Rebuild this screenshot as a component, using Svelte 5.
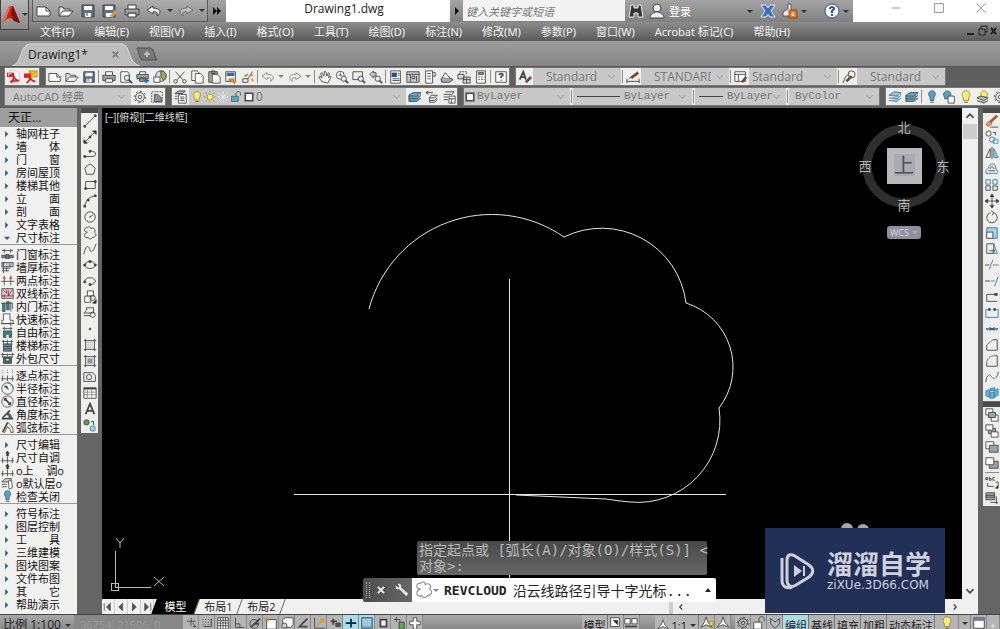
<script>
    const INK = 'stroke="#888"';
    const BLUE = 'stroke="#2f7fa8"';

    // 16x16 glyphs, inherit a dark 1px stroke and no fill from the svg
    const icons = {
        new: '<path fill="#fff" d="M1 4h9l4 4v5H1z"/><path d="M10 4v4h4"/>',
        open: '<path fill="#dde3e6" d="M1 13V4h4l1 2h6v2"/><path fill="#fff" d="M1 13l4-5h10l-4 5z"/>',
        save: '<path fill="#5d6f84" d="M2 2h12v12H2z"/><path fill="#fff" stroke="none" d="M4 3h8v4H4zM5 10h6v4H5z"/><path d="M7 10v3"/>',
        saveas: '<path fill="#5d6f84" d="M1 2h12v12H1z"/><path fill="#fff" stroke="none" d="M3 3h8v4H3zM4 10h6v4H4z"/><path stroke="#d89b3c" stroke-width="3" d="M9 14l5-6"/>',
        print: '<path fill="#fff" d="M4 6V2h8v4M4 11v3h8v-3"/><path fill="#99a0a6" d="M1 6h14v6h-3v-2H4v2H1z"/>',
        preview: '<path fill="#fff" d="M2 2h8l2 3v9H2z"/><circle cx="9" cy="9" r="3" fill="#dff0fa"/><path stroke-width="2" d="M11 11l4 4"/>',
        plot: '<path fill="#fff" d="M4 5V2h7v3"/><path fill="#99a0a6" d="M1 5h13v5H1zM4 9h7v4H4z"/><path stroke="#1e6fc0" stroke-width="2" d="M12 9v6M9 12h6"/>',
        sphere: '<circle cx="9" cy="7" r="6" fill="#d8dde0"/><path fill="#9fae55" d="M9 7V1c4 0 6 3 6 6 0 2-1 4-3 5z"/><path fill="#fff" d="M1 8h7v6H1z"/>',
        cut: '<path d="M3 2l8 9M13 2L5 11"/><circle cx="3" cy="13" r="2"/><circle cx="13" cy="13" r="2"/>',
        copy: '<path fill="#fff" d="M2 1h6l2 2v9H2z"/><path fill="#fff" d="M6 4h6l3 3v8H6z"/>',
        paste: '<path fill="#a9aaa6" d="M2 2h10v12H2z"/><path d="M5 1h4v3H5z"/><path fill="#fff" d="M6 5h6l3 3v7H6z"/>',
        match: '<path fill="#fff" d="M2 2h11v11H2z"/><path fill="#3b6ca8" stroke="none" d="M3 3h9v4H3z"/><path stroke="#d38a30" stroke-width="3" d="M5 11h7M9 12l4 3"/>',
        block: '<path d="M2 10h6v4H2zM8 10l5-8"/><path stroke="#d38a30" stroke-width="2" d="M4 7l4-2M11 6h3M12 10l2 3"/>',
        undo: '<path fill="#eee" d="M7 3L1 7l6 4V9c4-1 5 1 4 4 5-3 4-8-4-8z"/>',
        redo: '<path fill="#ddd" d="M9 3l6 4-6 4V9c-4-1-5 1-4 4-5-3-4-8 4-8z"/>',
        undoOff: `<path ${INK} d="M7 3L1 7l6 4V9c4-1 5 1 4 4 5-3 4-8-4-8z"/>`,
        redoOff: `<path ${INK} d="M9 3l6 4-6 4V9c-4-1-5 1-4 4-5-3-4-8 4-8z"/>`,
        pan: '<path fill="#fff" d="M4 13L1 8l1-1 3 2-2-5 1-1 3 4V2h2l1 5 2-4 1 1-1 5 2-2 1 1-4 7z"/>',
        zoomrt: '<circle cx="6" cy="6" r="4.5" fill="#fff"/><path d="M4 6h4M6 3v3"/><circle cx="10" cy="10" r="3" fill="#dff0fa"/><path stroke-width="2" d="M12 12l3 3"/>',
        zoomwin: '<path d="M1 2h11v9H1z"/><circle cx="10" cy="10" r="3" fill="#dff0fa"/><path stroke-width="2" d="M12 12l3 3"/>',
        zoomprev: '<path fill="#ccc" d="M5 1L1 5l4 4V7h3V3H5z"/><circle cx="10" cy="10" r="3" fill="#dff0fa"/><path stroke-width="2" d="M12 12l3 3"/>',
        props: '<path fill="#fff" d="M2 1h11v14H2z"/><path fill="#274f8d" stroke="none" d="M3 3h6v5H3z"/><path d="M10 4h2M10 6h2M4 10h8M4 12h8"/>',
        center: '<path fill="#c9cdd0" d="M1 2h14v12H1z"/><path d="M1 5h14M5 5v9M7 7h3v3H7zM12 7v6"/>',
        palette: '<path fill="#fff" d="M3 1h8v14H3z"/><path d="M11 3h3v4h-3M5 4h4M5 7h4M5 10h4"/>',
        sheet: '<path fill="#9ba6ae" d="M1 10l5-4 9 5-4 3H2z"/><path fill="#fff" d="M3 8l3-5 5 6"/>',
        markup: '<path stroke-dasharray="2 1" d="M3 5V2h8v3"/><path fill="#ddd" d="M7 8h8v7H7zM1 5h7v5H1z"/><path d="M7 11h8M11 8v7"/>',
        calc: '<path fill="#fff" d="M3 1h10v14H3z"/><path fill="#999" d="M5 3h6v2H5z"/><path stroke-dasharray="2 1" d="M5 8h7M5 11h7"/>',
        help: '<path fill="#fff" d="M2 2h12v12H2z"/><path stroke-width="2" d="M6 6c0-3 5-2 4 0l-2 2v1M8 11v1"/>',
        pdf: '<path fill="#fff" stroke="#ccc" d="M3 1h8l3 3v11H3z"/><path fill="#d22" stroke="none" d="M0 3h8v5H0z"/><path stroke="#d22" stroke-width="2" d="M4 14c4-3 4-6 4-7 1 4 3 5 6 5-4 0-7 0-10 2z"/><path stroke="#fff" d="M2 7V4h3"/>',
        pdfmail: '<path fill="#f4c534" stroke="#c98f1b" d="M6 1h9v7H6z"/><path stroke="#c98f1b" d="M6 1l4 4 5-4"/><path fill="#d22" stroke="none" d="M0 4h8v5H0z"/><path stroke="#d22" stroke-width="2" d="M3 15c4-3 4-6 4-7 1 4 3 5 6 5"/>',
        styleA: '<path stroke-width="2" d="M2 11L6 2l3 9M3 8h5"/><path stroke="#7a4a28" stroke-width="3" d="M9 14l6-6"/>',
        styleDim: '<path d="M1 10v5M15 10v5M1 13h14"/><path stroke="#7a4a28" stroke-width="3" d="M6 9l8-6"/><path d="M3 10l5-3"/>',
        styleTab: '<path fill="#fff" d="M1 2h12v11H1z"/><path d="M1 5h12M5 5v8"/><path stroke="#7a4a28" stroke-width="3" d="M9 14l5-6"/>',
        styleLead: '<circle cx="11" cy="5" r="4"/><path d="M1 15l3-7 4-4"/><path stroke="#7a4a28" stroke-width="3" d="M5 13l6-6"/>',
        gear: '<circle cx="8" cy="8" r="5"/><circle cx="8" cy="8" r="2"/><circle cx="8" cy="8" r="6.5" stroke-dasharray="2 3"/>',
        wsave: '<path stroke-dasharray="2 1" d="M2 2h12v12H2z"/><path fill="#88929a" d="M5 5h4l4 4v4H5z"/>',
        layers: '<path fill="#fff" d="M5 5h9v10H5z"/><path d="M7 8h5M7 10h5M7 12h5"/><path fill="#9cb6c4" d="M1 4l4-3h8l-3 3zM1 7h3M1 10h3"/>',
        stack: '<path fill="#9bc3db" stroke="#47758e" d="M1 6l6-4 8 1-5 4zM1 9l9 1 5-4M1 12l9 1 5-4"/>',
        stackcur: '<path fill="#5aa6d2" d="M1 6l5-3h9l-5 4H1zM1 7v3h9l5-4M1 10v3h9l5-4"/>',
        stackprev: '<path d="M7 6h7l-3 3H5zM5 9v3h6l3-3M5 12v2h6l3-3M1 3h8M1 3l3-2M1 3l3 2"/>',
        stackstate: '<path d="M4 2h10l-3 3H2M2 8h5M2 11h5"/><path fill="#fff" d="M8 7h7v8H8z"/><path d="M8 10h7M11 10v5"/>',
        bulbOn: '<path fill="#ffe97a" stroke="#a08b2e" d="M5 9C2 5 4 1 8 1s6 4 3 8v3H5z"/><path d="M6 14h4"/>',
        bulbOff: '<path fill="#5b9fc4" stroke="#336580" d="M6 9C3 5 4 1 8 1s5 4 2 8v3H6z"/><path d="M6 14h4"/>',
        bulbCopy: '<path fill="#5b9fc4" stroke="#336580" d="M3 8C0 5 3 1 6 1s6 4 3 7v2H3z"/><path fill="#fff" d="M7 7h7v8H7z"/>',
        bulbStack: '<path fill="#ffe97a" stroke="#a08b2e" d="M7 8C4 5 6 1 9 1s6 4 3 7z"/><path fill="#bbb" d="M1 9l4-2 9 2-5 3zM1 12l8 3 5-3"/>',
        sun: '<circle cx="8" cy="8" r="4" fill="#ffe97a" stroke="#a08b2e"/><path stroke="#a08b2e" d="M8 0v2M8 14v2M0 8h2M14 8h2M2 2l2 2M12 12l2 2M2 14l2-2M12 4l2-2"/>',
        frost: '<path stroke="#eee" stroke-dasharray="3 1" d="M8 1v14M1 8h14M3 3l10 10M3 13L13 3"/>',
        lock: '<path fill="#65a3c5" stroke="#336580" d="M2 7h9v7H2z"/><path d="M8 7V3c0-3 6-3 6 0v3"/>',
        box: '<path fill="#fff" stroke-width="2" d="M3 3h10v10H3z"/>',
        line: '<path d="M2 14L14 2"/><path fill="#444" d="M1 13h2v2H1zM13 1h2v2h-2z"/>',
        xline: '<path d="M2 14L14 2"/><path fill="#222" d="M1 15v-4l4 4zM15 1v4l-4-4zM7 7h2v2H7z"/>',
        pline: '<path d="M2 12h9c5 0 4-6 0-6H8"/><path fill="#444" d="M1 11h2v2H1zM7 5h2v2H7z"/>',
        polygon: '<path d="M8 2l6 5-2 7H4L2 7z"/>',
        rect: '<path d="M3 4h11v8H3z"/><path fill="#444" d="M2 11h2v2H2zM13 3h2v2h-2z"/>',
        arc: '<path d="M2 14C3 7 7 3 14 2"/><path fill="#444" d="M1 13h2v2H1zM5 6h2v2H5zM13 1h2v2h-2z"/>',
        circle: '<circle cx="8" cy="8" r="6"/><path d="M8 8l4-3M7 8h2"/>',
        cloud: '<path d="M5 7C0 7 1 1 5 2c2-2 4-1 4 1 4-2 6 2 4 4 3 2 2 6-2 6-2 3-5 2-5 0-5 2-6-4-1-6z"/>',
        spline: '<path d="M1 14C4 0 7 6 8 9s3 4 7-7"/>',
        ellipse: '<ellipse cx="8" cy="8" rx="6" ry="4"/><path fill="#222" d="M7 3h2v2H7zM1 7h2v2H1zM13 7h2v2h-2z"/>',
        earc: '<path d="M2 8c0-5 12-5 12 0 0 3-3 4-6 4"/><path fill="#444" d="M7 11h2v2H7zM1 8h2v2H1z"/>',
        insert: '<path fill="#fff" d="M5 1h7v6H5z"/><path fill="#fff" d="M2 7h7v7H2z"/><circle cx="11" cy="9" r="3"/><path fill="#222" d="M15 11v4h-4z"/>',
        makeblock: '<path d="M4 2h8v6H1l3-3zM1 11h7"/><circle cx="11" cy="10" r="3"/>',
        point: '<circle cx="8" cy="8" r="1" fill="#444"/>',
        hatch: '<path d="M1 3h14M1 13h14M3 1v14M13 1v14"/><path stroke="#999" stroke-dasharray="1 1" d="M4 5h8M4 7h8M4 9h8M4 11h8"/>',
        gradient: '<path fill="#8d979d" stroke="none" d="M5 5h6v6H5z"/><path d="M1 3h14M1 13h14M3 1v14M13 1v14"/>',
        region: '<path d="M1 3h9c4 0 5 5 4 10H1z"/><circle cx="7" cy="8" r="3"/>',
        table: '<path fill="#fff" d="M1 2h14v12H1z"/><path stroke-width="2" d="M1 3h14"/><path stroke="#888" d="M1 7h14M1 10h14M5 4v10M10 4v10"/>',
        mtext: '<path stroke-width="2" d="M3 14L8 2l5 12M5 10h6"/>',
        addsel: '<circle cx="4" cy="5" r="3" fill="#5da257"/><circle cx="11" cy="12" r="3" fill="#a5d5ef" stroke="#2f7fa8"/><path d="M9 4h3v4"/>',
        erase: '<path stroke="#a55a2c" stroke-width="3" d="M5 10l9-8"/><path fill="#d9a17a" stroke="#a55a2c" d="M1 12l4-4 3 3-4 3z"/><path d="M6 15h9"/>',
        copyobj: `<circle cx="4" cy="4" r="3"/><path d="M9 3h3v3"/><g ${BLUE}><circle cx="8" cy="11" r="3"/><circle cx="12" cy="13" r="3"/></g>`,
        mirror: `<path d="M6 3v10H1z"/><path fill="#9cc9df" ${BLUE} d="M10 3v10h5z"/><path d="M8 1v14"/>`,
        offset: `<path ${BLUE} d="M1 12c0-4 2-4 3-5 1-8 10-5 8 1 3 0 3 4 2 5H1z"/><path d="M4 10h8M6 8c0-4 4-3 4 0"/>`,
        array: `<path d="M1 9h5v5H1zM9 9h5v5H9z"/><path ${BLUE} d="M1 2h5v5H1zM9 2h5v5H9z"/>`,
        move: '<path fill="#222" d="M8 0l2 3H6zM8 16l2-3H6zM0 8l3-2v4zM16 8l-3-2v4z"/><path d="M8 3v3M8 10v3M3 8h3M10 8h3M7 7h2v2H7z"/>',
        rotate: '<path d="M10 3a6 6 0 1 1-4 0M10 3L7 1M10 3L8 6"/>',
        scale: `<path fill="#a6d1e6" ${BLUE} d="M2 2h12v12H2z"/><path fill="#fff" d="M2 7h7v7H2z"/>`,
        stretch: `<path d="M2 2h8v11H2z"/><path ${BLUE} d="M10 2l4 11H2"/><path d="M5 10h6M9 8l2 2-2 2"/>`,
        trim: `<path d="M0 8h5"/><path ${BLUE} d="M5 13l4-11"/><path stroke-dasharray="2 1" d="M9 8h7"/>`,
        extend: `<path d="M0 8h6"/><path ${BLUE} d="M11 14l4-11M7 8h4"/>`,
        breakpt: '<path d="M14 13H2V5h10"/><path fill="#245f85" d="M11 4h3v2h-3z"/>',
        break: `<path ${BLUE} d="M3 4H1v9h14V4h-2"/><path fill="#245f85" d="M4 3h2v2H4zM10 3h2v2h-2z"/>`,
        join: `<path ${BLUE} stroke-width="2" d="M1 8h14"/><path d="M5 6l3 2-3 2M11 6L8 8l3 2"/>`,
        chamfer: `<path d="M2 8v6h12V2H9"/><path ${BLUE} d="M2 8l7-6"/>`,
        fillet: `<path d="M2 10v4h12V2h-3"/><path ${BLUE} d="M2 10c0-5 4-8 9-8"/>`,
        blend: `<path d="M1 14c0-4 1-7 3-8M12 9c2-1 3-4 3-7"/><path ${BLUE} d="M4 6c3-3 4 7 8 3"/>`,
        explode: `<g fill="#6db4d6" ${BLUE}><path d="M1 6l4-2v9l-4-2zM6 7h4v7H6zM11 5l4-2v7l-4 3zM6 3l5-1v3H6z"/></g>`,
        front: '<path fill="#fff" d="M1 1h8v7H1zM7 8h8v7H7z"/><path fill="#9ca3a8" d="M4 5h8v6H4z"/>',
        back: '<path fill="#9ca3a8" d="M4 5h8v6H4z"/><path fill="#fff" d="M1 1h8v6H1zM7 9h8v6H7z"/>',
        above: '<path fill="#fff" d="M1 2h9v8H1z"/><path fill="#9ca3a8" d="M5 6h10v8H5z"/>',
        under: '<path fill="#9ca3a8" d="M5 6h10v8H5z"/><path fill="#fff" d="M1 2h9v8H1z"/>',
        textfront: '<path d="M1 6V3h2v3M1 5h2M5 2v4h2V4H5M11 3H9v3h2M3 9v4h7M12 8h3v4"/><path fill="#222" d="M15 12v3h-3z"/>',
        hatchback: '<path fill="#9ca3a8" d="M1 2h10v8H1z"/><path d="M1 5h10M1 7h10M6 13h9M13 6v9"/>',
        wallA: '<path d="M1 3h14M4 1v5M12 1v5"/><path fill="#5a8a98" d="M1 9h5v3H1zM10 9h5v3h-5zM6 8h4v5H6z"/>',
        wallB: '<path fill="#bcd" d="M1 2h14v5H1z"/><path d="M3 1v14M7 7v6M1 9h10M1 12h9M11 3v5"/>',
        dim2: '<path d="M0 9h16M4 2v12M12 2v12"/><path stroke="#b22" d="M2 5h4M10 5h4"/>',
        dimD: '<path fill="#e5d0d0" d="M1 2h14v12H1z"/><path stroke="#822" d="M2 3l5 5V3M14 3l-5 8V4M1 11h14M4 13V9"/>',
        dimN: '<path fill="#3d8c93" d="M2 4h3v10H2zM7 2h3v10H7z"/><path d="M0 4h15M12 2v12M14 5v6"/>',
        quick: '<path fill="#fff" d="M3 1h8v8h4v4H1V9h2z"/><path d="M0 13h16M12 11v5"/>',
        free: '<path fill="#3a8a7f" d="M3 6h10v8h-3v-4H6v4H3z"/><path d="M2 3h12M4 1v4M12 1v4"/>',
        stair: '<path fill="#6b87a5" d="M3 6h10v9H3z"/><path d="M1 3h14M3 1v6M8 1v6M13 1v6M3 9h10M3 12h10"/>',
        outer: '<path fill="#3b7060" d="M3 6h10v8H3z"/><path fill="#fff" d="M6 8h4v3H6z"/><path d="M0 3h16M2 1v6M14 1v6M8 2v3"/>',
        each: '<path d="M0 12h16M2 8v7M8 8v7M14 8v7"/><path stroke="#b22" stroke-dasharray="1 2" d="M2 1v6M8 1v6M14 1v6"/>',
        radius: '<circle cx="8" cy="8" r="7"/><path fill="#333" d="M9 9L4 5h3z"/><path stroke="#277" d="M8 1a7 7 0 0 1 7 7"/>',
        diameter: '<circle cx="8" cy="8" r="7"/><path stroke-width="2" d="M5 5l6 6"/><path fill="#333" d="M4 4h3L4 7zM12 12H9l3-3z"/>',
        angle: '<path stroke-width="2" d="M1 13h14M2 12l9-9"/><path fill="#277" d="M7 8c3 1 3 3 3 5h3c0-4-2-6-4-7z"/>',
        arclen: '<path stroke-width="2" d="M2 14L8 2"/><path d="M4 15l4-8c3 2 4 4 4 7h3C15 7 11 3 8 2"/>',
        self: '<path d="M0 12h16M2 8v7M14 8v7M8 7v8"/><path fill="#222" d="M8 0l2 3H6zM7 4h2v2H7z"/>',
        deflayer: '<path fill="#ccc" d="M1 6l4-4h8l-3 4zM1 9h6M1 12h6"/><path fill="#fff" d="M9 5l4-1 1 9-4 2z"/>',
        snap: '<path d="M8 2v9M3 6h10M10 8l4 5M10 12h4"/>',
        dots: '<path stroke-dasharray="1 2" d="M3 4h10M3 7h10M3 10h10"/><path d="M13 3v9H4"/>',
        grid: '<path fill="#fff" d="M2 2h12v13H2z"/><path d="M5 2v13M8 2v13M11 2v13M2 5h12M2 8h12M2 11h12"/>',
        ortho: '<path d="M4 2v11h10M4 9h5v4"/>',
        polar: '<circle cx="7" cy="9" r="5"/><path stroke-width="2" d="M3 13L14 3M6 9h6"/>',
        osnap: '<path fill="#fff" d="M3 4h11v11H3z"/><path stroke="#c93" d="M1 2h4v4H1z"/>',
        cube: '<path fill="#fff" d="M3 4l3-2h9v8l-3 3H3z"/><circle cx="5" cy="11" r="3" fill="#ccc"/>',
        otrack: '<path stroke-width="2" d="M13 3L4 12h9"/>',
        ducs: '<path d="M3 2v12h12"/><path stroke="#e29a2e" stroke-width="2" d="M6 11l6-7M9 4h4v4"/>',
        dyn: '<path stroke-width="2" d="M3 6h7M6 3v7"/><path fill="#555" d="M9 8h5v4H9z"/>',
        lwt: '<path stroke="#123" stroke-width="2" d="M2 8h12M8 3v10"/>',
        tpy: '<path fill="#7fb7dc" d="M2 2h12v12H2z"/><path stroke="#fff" stroke-dasharray="1 1" d="M3 4h10M3 6h10M3 8h10M3 10h10"/>',
        qp: '<path fill="#eee" stroke-width="2" d="M5 4h7v8H5z"/>',
        cycle: '<path fill="#62a552" d="M8 7h6v8H8z"/><path d="M2 4h7v3M5 1v6"/>',
        plus: '<path fill="#fff" d="M6 2h4v4h4v4h-4v5H6v-5H2V6h4z"/>',
        anno: '<path fill="#fff" d="M8 1l2 6 5 6-7-3-7 3 5-6z"/>',
        annoY: '<path fill="#fff" d="M7 1l2 6 5 6-7-3-6 3 4-6z"/><path fill="#f5d54a" stroke="#a08b2e" d="M11 6h4v5h-4z"/>',
        sheetA: '<path fill="#fff" d="M3 2h10v10H3z"/><path fill="#222" d="M6 5h5v5z"/>',
        sheetB: '<path fill="#fff" d="M1 3h6v6H1zM9 3h6v6H9z"/><path stroke-width="2" d="M1 12h14"/>',
        unlock: '<path fill="#fff" d="M2 7h9v8H2z"/><path d="M8 7V3c0-3 6-3 6 0v3"/>',
        shield: '<path fill="#bbb" d="M3 3l5 4 5-4v6l-5 5-5-5z"/>',
        clean: '<path fill="#fff" d="M2 2h12v12H2z"/><path stroke-width="3" stroke="#679" d="M2 4h12"/>',
        more: '<path stroke="#eee" d="M5 12h6M8 9v6"/>',
        binoc: '<path fill="#333" stroke="#eee" d="M3 2h3v3h4V2h3l2 12h-5v-4H6v4H1z"/>',
        user: '<circle cx="8" cy="5" r="4" fill="#eee"/><path fill="#eee" d="M1 15c0-5 5-5 5-6h4c0 1 5 1 5 6z"/>',
        exchange: '<path fill="#3e6fb6" stroke="#dfe8f5" d="M1 2h5l2 3 2-3h5l-4 6 4 6h-5l-2-3-2 3H1l4-6z"/>',
        a360: '<path fill="#eee" stroke="#557" d="M6 1h3v5l4 4-2 3H1V9l5-3z"/><path fill="#e07a1c" stroke="#a44b08" d="M7 7h8v8H7z"/><path stroke="#fff" d="M11 9v4M9 11l2 2 2-2"/>',
        qhelp: '<circle cx="8" cy="8" r="7" fill="#fff" stroke="#2a4f93"/><path stroke="#2a4f93" stroke-width="2" d="M6 6c0-3 5-2 4 0l-2 2v2M8 11v2"/>',
        wrench: '<path fill="#e5e5e5" stroke="none" d="M1 3l3 2 1-1-2-3c3-1 5 1 4 4l8 7-2 3-8-8C2 8 0 6 1 3z"/>',
        x: '<path stroke="#eee" stroke-width="3" d="M3 3l10 10M13 3L3 13"/>',
        xtab: '<path stroke="#7d7d7d" stroke-width="3" d="M3 3l10 10M13 3L3 13"/>',
        min: '<path stroke="#888" d="M3 8h10"/>',
        max: '<path stroke="#888" d="M3 3h10v10H3z"/>',
        close: '<path stroke="#888" d="M3 3l10 10M13 3L3 13"/>',
        first: '<path d="M3 3v10"/><path fill="#555" d="M11 3v10L6 8z"/>',
        prev: '<path fill="#555" d="M10 3v10L5 8z"/>',
        next: '<path fill="#555" d="M6 3v10l5-5z"/>',
        last: '<path d="M13 3v10"/><path fill="#555" d="M5 3v10l5-5z"/>',
        up: '<path stroke-width="2" d="M4 10l4-4 4 4"/>',
        down: '<path stroke-width="2" d="M4 6l4 4 4-4"/>',
        left: '<path stroke-width="2" d="M10 4L6 8l4 4"/>',
        right: '<path stroke-width="2" d="M6 4l4 4-4 4"/>',
        tri: '<path fill="#2c6384" stroke="none" d="M5 3v10l5-5z"/>',
        tridown: '<path fill="#2c6384" stroke="none" d="M3 6h10l-5 5z"/>'
    };

    const menus = ['文件(F)', '编辑(E)', '视图(V)', '插入(I)', '格式(O)', '工具(T)', '绘图(D)', '标注(N)', '修改(M)', '参数(P)', '窗口(W)', 'Acrobat 标记(C)', '帮助(H)'];

    // '|' is a separator, 'v' a small drop arrow
    const standard = ['new', 'open', 'save', '|', 'print', 'preview', 'plot', 'sphere', '|', 'cut', 'copy', 'paste', 'match', 'block', '|', 'undoOff', 'v', 'redoOff', 'v', '|', 'pan', 'zoomrt', 'zoomwin', 'zoomprev', '|', 'props', 'center', 'palette', 'sheet', 'markup', 'calc', '|', 'help'];
    const layerTools = ['stack', 'stackcur', '|', 'bulbOff', 'bulbCopy', 'bulbOn', 'bulbStack', 'gear'];

    const styles = [
        { icon: 'styleA', label: '文字样式', value: 'Standard' },
        { icon: 'styleDim', label: '标注样式', value: 'STANDARD' },
        { icon: 'styleTab', label: '表格样式', value: 'Standard' },
        { icon: 'styleLead', label: '多重引线样式', value: 'Standard' }
    ];

    const draw = ['line', 'xline', 'pline', 'polygon', 'rect', 'arc', 'circle', 'cloud', 'spline', 'ellipse', 'earc', 'insert', 'makeblock', 'point', 'hatch', 'gradient', 'region', 'table', 'mtext', 'addsel'];
    const modify = ['erase', 'copyobj', 'mirror', 'offset', 'array', 'move', 'rotate', 'scale', 'stretch', 'trim', 'extend', 'breakpt', 'break', 'join', 'chamfer', 'fillet', 'blend', 'explode'];
    const order = ['front', 'back', 'above', 'under', '|', 'textfront', 'hatchback'];

    const sections = [
        [['tri', '轴网柱子'], ['tri', '墙 体'], ['tri', '门 窗'], ['tri', '房间屋顶'], ['tri', '楼梯其他'], ['tri', '立 面'], ['tri', '剖 面'], ['tri', '文字表格'], ['tridown', '尺寸标注']],
        [['wallA', '门窗标注'], ['wallB', '墙厚标注'], ['dim2', '两点标注'], ['dimD', '双线标注'], ['dimN', '内门标注'], ['quick', '快速标注'], ['free', '自由标注'], ['stair', '楼梯标注'], ['outer', '外包尺寸']],
        [['each', '逐点标注'], ['radius', '半径标注'], ['diameter', '直径标注'], ['angle', '角度标注'], ['arclen', '弧弦标注']],
        [['tri', '尺寸编辑'], ['self', '尺寸自调'], ['self', 'o上 调o'], ['deflayer', 'o默认层o'], ['bulbOff', '检查关闭']],
        [['tri', '符号标注'], ['tri', '图层控制'], ['tri', '工 具'], ['tri', '三维建模'], ['tri', '图块图案'], ['tri', '文件布图'], ['tri', '其 它'], ['tri', '帮助演示']]
    ];

    const toggles = ['snap', 'dots', 'grid', 'ortho', 'polar', 'osnap', 'cube', 'otrack', 'ducs', 'dyn', 'lwt', 'tpy', 'qp', 'cycle', 'plus'];
    const modes = ['编组', '基线', '填充', '加粗', '动态标注'];

    let active = $state(['lwt', 'tpy', '编组']);
    let command = $state('沿云线路径引导十字光标...');

    function toggle(name) {
        active = active.includes(name) ? active.filter(n => n !== name) : [...active, name];
    }
</script>

{#snippet icon(name, size = 14)}
    <svg class="icon" width={size} height={size} viewBox="0 0 16 16" fill="none" stroke="#444" aria-hidden="true">{@html icons[name]}</svg>
{/snippet}

{#snippet tools(list)}
    {#each list as name}
        {#if name === '|'}
            <span class="sep"></span>
        {:else if name === 'v'}
            <button class="drop" aria-label="more"><i class="caret"></i></button>
        {:else}
            <button class="tool" aria-label={name}>{@render icon(name)}</button>
        {/if}
    {/each}
{/snippet}

<div class="app">
    <header class="title">
        <button class="logo" aria-label="menu">
            <svg width="18" height="20" viewBox="0 0 18 20" aria-hidden="true">
                <path fill="#c4221b" d="M7 1h4l7 17-6-2-3-3-4 1-5 4z"/>
                <path fill="#7d0f0c" d="M11 1l7 17-6-2L9 8z"/>
                <path fill="#ef6a55" d="M7 1h2L4 14l-4 4z"/>
            </svg>
            <i class="caret"></i>
        </button>
        <div class="quick">
            {#each ['new', 'open', 'save', 'saveas', 'print', 'undo'] as name}
                <button class="qat" aria-label={name}>{@render icon(name, 16)}</button>
            {/each}
            <button class="drop" aria-label="undo list"><i class="caret"></i></button>
            <button class="qat dim" aria-label="redo">{@render icon('redo', 16)}</button>
            <button class="drop" aria-label="redo list"><i class="caret"></i></button>
        </div>
        <button class="expand" aria-label="expand"><i class="play"></i><i class="play"></i></button>
        <h1>Drawing1.dwg</h1>
        <button class="go" aria-label="search options"><i class="play"></i></button>
        <input class="search" placeholder="键入关键字或短语" aria-label="搜索">
        <div class="info">
            <button class="qat" aria-label="find">{@render icon('binoc', 16)}</button>
            <button class="login">{@render icon('user', 16)}<span>登录</span></button>
            <i class="caret push"></i>
            <button class="qat" aria-label="exchange">{@render icon('exchange', 16)}</button>
            <button class="qat" aria-label="connect">{@render icon('a360', 16)}</button>
            <i class="caret"></i>
            <button class="qat ask" aria-label="help">{@render icon('qhelp', 16)}</button>
            <i class="caret"></i>
        </div>
        <div class="winbtns">
            <button aria-label="minimize">{@render icon('min', 14)}</button>
            <button aria-label="maximize">{@render icon('max', 14)}</button>
            <button aria-label="close">{@render icon('close', 14)}</button>
        </div>
    </header>

    <nav class="menubar">
        {#each menus as menu}
            <button>{menu}</button>
        {/each}
        <span class="docbtns">
            <svg width="32" height="12" viewBox="0 0 32 12" fill="none" stroke="#222" aria-hidden="true">
                <path stroke-width="2" d="M1 9h7M25 3l5 6M30 3l-5 6"/>
                <path d="M13 4h6v6h-6zM15 4V1h6v6h-2"/>
            </svg>
        </span>
    </nav>

    <div class="tabs">
        <div class="tab">
            <svg class="shape" viewBox="0 0 128 24" preserveAspectRatio="none" aria-hidden="true">
                <path fill="#bdbdbd" stroke="#d8d8d8" d="M0 24C10 22 8 1 18 1h92c8 0 6 20 18 23z"/>
            </svg>
            <span>Drawing1*</span>
            <button aria-label="close tab">{@render icon('xtab', 9)}</button>
        </div>
        <button class="newtab" aria-label="new tab">
            <svg width="22" height="14" viewBox="0 0 22 14" fill="#777" stroke="#4e4e4e" aria-hidden="true">
                <path d="M1 1h13c5 0 4 9 7 12H8C2 13 4 5 1 1z"/>
                <path stroke="#bbb" stroke-width="2" d="M11 4v6M8 7h6"/>
            </svg>
        </button>
    </div>

    <div class="dock">
        <div class="bars">
            <div class="bar">{@render tools(['pdf', 'pdfmail'])}</div>
            <div class="bar">{@render tools(standard)}</div>
            <div class="bar">
                {#each styles as s, i}
                    {#if i}<span class="sep"></span>{/if}
                    <button class="tool" aria-label={s.label}>{@render icon(s.icon)}</button>
                    <span class="pick style" class:tight={i === 2}><select aria-label={s.label}><option>{s.value}</option></select></span>
                {/each}
            </div>
        </div>
        <div class="bars">
            <div class="bar">
                <span class="pick workspace"><select aria-label="工作空间"><option>AutoCAD 经典</option></select></span>
                {@render tools(['gear', 'wsave'])}
            </div>
            <div class="bar">
                {@render tools(['layers'])}
                <span class="pick layer">
                    {#each ['bulbOn', 'sun', 'frost', 'lock', 'box'] as name}{@render icon(name, 12)}{/each}
                    <select aria-label="图层"><option>0</option></select>
                </span>
                {@render tools(['stackcur', 'stackprev', 'stackstate'])}
            </div>
            <div class="bar mono">
                <span class="pick color">{@render icon('box', 12)}<select aria-label="颜色"><option>ByLayer</option></select></span>
                <span class="sep"></span>
                <span class="pick ltype"><i class="rule"></i><select aria-label="线型"><option>ByLayer</option></select></span>
                <span class="sep"></span>
                <span class="pick weight"><i class="rule"></i><select aria-label="线宽"><option>ByLayer</option></select></span>
                <span class="sep"></span>
                <span class="pick plotstyle"><select aria-label="打印样式"><option>ByColor</option></select></span>
            </div>
            <div class="bar last">{@render tools(layerTools)}</div>
        </div>
    </div>

    <main>
        <aside class="side">
            <h2>天正...</h2>
            {#each sections as rows, i}
                <ul class:ruled={i > 0}>
                    {#each rows as [glyph, label]}
                        <li><button><span class="glyph">{@render icon(glyph, glyph.startsWith('tri') ? 10 : 13)}</span><span class="label" class:wide={label.includes('o')}>{#each label.split(' ') as part}<span>{part}</span>{/each}</span></button></li>
                    {/each}
                </ul>
            {/each}
        </aside>

        <div class="rail left">
            <div class="column"><i class="grip"></i>{@render tools(draw)}</div>
        </div>

        <section class="view">
            <div class="canvas">
                <svg class="drawing" viewBox="102 108 860 491" preserveAspectRatio="xMinYMin meet" fill="none" stroke="#e6e6e6" aria-hidden="true">
                    <path d="M369 309A127 127 0 0 1 564 237A85 85 0 0 1 686 303A67 67 0 0 1 719 408A82 82 0 0 1 630 502Q618 501 606 499L516 495"/>
                    <g shape-rendering="crispEdges">
                        <path d="M509.500 279V578M294 494.500H726"/>
                        <path stroke="#bbb" d="M115.500 551V587M115 587.500H151M111.500 583.500h7v7h-7z"/>
                    </g>
                    <path stroke="#bbb" d="M116 538l4 5 4-5M120 543v5M154 577l10 9M164 577l-10 9"/>
                    <g fill="#a9a9a9" stroke="none"><circle cx="847" cy="529" r="6"/><circle cx="863" cy="530" r="6"/></g>
                </svg>
                <div class="viewlabel">[−][俯视][二维线框]</div>
                <div class="compass">
                    <svg width="92" height="96" viewBox="0 0 92 96" aria-hidden="true">
                        <circle cx="46" cy="48" r="37" fill="none" stroke="#2e2e2e" stroke-width="9"/>
                        <path fill="#b9b9bb" d="M29 30h35v36H29z"/>
                        <path fill="#a9abb0" d="M36 36h21v22H36z"/>
                        <g class="dirs"><text x="46" y="14">北</text><text x="7" y="53">西</text><text x="85" y="53">东</text><text x="46" y="92">南</text></g>
                        <text class="face" x="46" y="55">上</text>
                    </svg>
                    <button class="wcs">WCS <i class="caret"></i></button>
                </div>
            </div>
            <div class="vscroll">
                <button aria-label="up">{@render icon('up')}</button>
                <i class="thumb"></i>
                <button class="end" aria-label="down">{@render icon('down')}</button>
            </div>
            <div class="layouts">
                {#each ['first', 'prev', 'next', 'last'] as name}
                    <button class="step" aria-label={name}>{@render icon(name, 12)}</button>
                {/each}
                <button class="layout on"><span>模型</span></button>
                <button class="layout"><span>布局1</span></button>
                <button class="layout"><span>布局2</span></button>
                <span class="hscroll">
                    <i class="split"></i>
                    <button aria-label="left">{@render icon('left', 10)}</button>
                    <button class="end" aria-label="right">{@render icon('right', 10)}</button>
                </span>
            </div>

            <div class="command">
                <div class="history"><p>指定起点或 [弧长(A)/对象(O)/样式(S)] &lt;</p><p>对象&gt;:</p></div>
                <div class="entry">
                    <i class="handle"></i>
                    <button class="x" aria-label="close">{@render icon('x', 10)}</button>
                    <button class="cfg" aria-label="customize">{@render icon('wrench')}</button>
                    <label for="cmd"><span class="faded">{@render icon('cloud', 18)}</span><i class="caret"></i><b>REVCLOUD</b></label>
                    <input id="cmd" bind:value={command}>
                    <button class="recent" aria-label="recent"><i class="caret flip"></i></button>
                </div>
            </div>

            <div class="brand">
                <svg width="36" height="38" viewBox="0 0 36 38" fill="none" stroke="#cdd1dd" stroke-width="3" aria-hidden="true">
                    <path d="M8 28V8c0-6 4-6 8-4l14 9c5 4 5 8 0 12l-13 8c-5 3-9 1-9-5"/>
                    <path d="M3 6v22c0 7 5 9 10 7"/>
                    <path fill="#cdd1dd" stroke="none" d="M15 13v12l8-6zM24 14h2v10h-2z"/>
                </svg>
                <div><strong>溜溜自学</strong><span>ziXUe.3D66.COM</span></div>
            </div>
        </section>

        <div class="rail right">
            <div class="column"><i class="grip"></i>{@render tools(modify)}</div>
            <div class="column"><i class="grip"></i>{@render tools(order)}</div>
        </div>
    </main>

    <footer>
        <button class="ratio">比例 1:100 <i class="caret"></i></button>
        <span class="coords">96754, 21506, 0</span>
        {#each toggles as name}
            <button class="toggle" class:on={active.includes(name)} aria-label={name} onclick={() => toggle(name)}>{@render icon(name)}</button>
        {/each}
        <span class="fill"></span>
        <button class="mode">模型</button>
        <button class="toggle" aria-label="layout">{@render icon('sheetA')}</button>
        <button class="toggle" aria-label="views">{@render icon('sheetB')}</button>
        <span class="gap"></span>
        <button class="mode scale">{@render icon('anno', 12)}1:1<i class="caret"></i></button>
        {#each ['annoY', 'anno'] as name}
            <button class="toggle" aria-label={name}>{@render icon(name)}</button>
        {/each}
        <span class="gap small"></span>
        {#each ['gear', 'unlock', 'shield'] as name}
            <button class="toggle" aria-label={name}>{@render icon(name)}</button>
        {/each}
        {#each modes as name}
            <button class="mode" class:on={active.includes(name)} onclick={() => toggle(name)}>{name}</button>
        {/each}
        <button class="toggle lamp" aria-label="isolate">{@render icon('bulbOn')}</button>
        <button class="toggle menu" aria-label="status menu"><i class="caret"></i></button>
        <button class="toggle" aria-label="clean screen">{@render icon('clean')}</button>
        <button class="toggle rest" aria-label="more">{@render icon('more', 12)}</button>
    </footer>
</div>

<style>
    :global(body) {
        margin: 0;
        background: #5f5f5f;
    }

    .app {
        display: flex;
        flex-direction: column;
        height: 100vh;
        overflow: hidden;
        font: 12px/1 "Open Sans", "Noto Sans CJK SC", sans-serif;
        color: #222;
    }

    button, input, select {
        margin: 0;
        padding: 0;
        border: 0;
        background: none;
        font: inherit;
        color: inherit;
        border-radius: 0;
    }

    button {
        display: flex;
        align-items: center;
        justify-content: center;
        flex: none;
        white-space: nowrap;
    }

    .icon {
        display: block;
        flex: none;
    }

    .caret {
        flex: none;
        border: 3px solid transparent;
        border-top-color: #333;
        border-bottom: 0;
    }

    .caret.flip {
        border-top: 0;
        border-bottom: 4px solid #222;
    }

    .play {
        border: 4px solid transparent;
        border-left-color: #111;
        border-right: 0;
    }

    /* title bar */
    .title {
        display: flex;
        height: 22px;
        flex: none;
        background: linear-gradient(#a4a4a4, #808080);
    }

    .logo {
        position: relative;
        z-index: 2;
        width: 29px;
        height: 30px;
        gap: 2px;
        background: linear-gradient(#b8b8b8, #8a8a8a);
        border: 1px solid #444;
        border-top: 0;
        box-sizing: border-box;
    }

    .quick {
        display: flex;
        align-items: center;
        margin-left: 3px;
        width: 176px;
        background: linear-gradient(#adadad, #8f8f8f);
        border: 1px solid #5c5c5c;
        border-top: 0;
        box-sizing: border-box;
    }

    .qat {
        width: 22px;
        height: 20px;
    }

    .dim {
        opacity: 0.5;
    }

    .drop {
        width: 10px;
    }

    .dock .caret {
        border-top-color: #888;
    }

    .expand {
        width: 18px;
    }

    h1 {
        flex: 1;
        margin: 0;
        padding-left: 12px;
        background: #fff;
        font-size: 12px;
        font-weight: 400;
        line-height: 18px;
        text-align: center;
    }

    .go {
        width: 13px;
    }

    .search {
        width: 162px;
        height: 21px;
        padding: 2px 3px 0;
        box-sizing: border-box;
        background: #f3f3f3;
        font-size: 11px;
        font-style: italic;
    }

    .search::placeholder {
        color: #777;
    }

    .info {
        display: flex;
        align-items: center;
        width: 228px;
        font-size: 11px;
        color: #fff;
    }

    .login {
        gap: 4px;
        margin-left: 2px;
    }

    .push {
        margin-left: auto;
    }

    .info > .caret {
        margin-right: 4px;
    }

    .ask {
        margin-left: 10px;
    }

    .winbtns {
        display: flex;
        justify-content: space-between;
        width: 147px;
        padding: 0 12px 6px 36px;
        box-sizing: border-box;
        background: #fff;
    }

    .menubar {
        display: flex;
        align-items: center;
        gap: 20px;
        height: 19px;
        flex: none;
        padding: 0 2px 0 40px;
        background: linear-gradient(#8d8d8d, #5a5a5a);
        font-family: "Noto Sans", "Noto Sans CJK SC", sans-serif;
        font-size: 11px;
        color: #f2f2f2;
    }

    .docbtns {
        margin-left: auto;
    }

    .tabs {
        display: flex;
        align-items: flex-end;
        height: 25px;
        flex: none;
        padding-left: 12px;
        background: linear-gradient(#9c9c9c, #868686);
        border-bottom: 1px solid #555;
    }

    .tab {
        position: relative;
        display: flex;
        align-items: center;
        width: 128px;
        height: 23px;
    }

    .tab .shape {
        position: absolute;
        inset: 0;
        width: 100%;
        height: 100%;
    }

    .tab span {
        position: relative;
        flex: 1;
        padding-left: 16px;
        font-size: 12px;
    }

    .tab button {
        position: relative;
        margin-right: 20px;
    }

    .newtab {
        margin-bottom: 5px;
        margin-left: -4px;
    }

    /* docked toolbars */
    .dock {
        flex: none;
        padding: 1px 0 3px;
        background: #5f5f5f;
    }

    .bars {
        display: flex;
        gap: 7px;
        height: 17px;
        padding-left: 5px;
        margin-bottom: 3px;
    }

    .bars:last-child {
        margin-bottom: 0;
    }

    .bar {
        display: flex;
        align-items: stretch;
        background: #eeeeec;
        box-shadow: 0 0 0 1px #777;
    }

    .bar.last {
        flex: 1;
        overflow: hidden;
    }

    .tool {
        width: 17px;
        height: 17px;
    }

    .sep {
        flex: none;
        width: 1px;
        margin: 2px 1px;
        background: #8b8b8b;
    }

    .pick {
        position: relative;
        display: flex;
        align-items: center;
        gap: 1px;
        background: #c8c8c8;
        color: #777;
        overflow: hidden;
    }

    .pick::after {
        content: "";
        position: absolute;
        right: 7px;
        top: 5px;
        width: 4px;
        height: 4px;
        border: solid #a8a8a8;
        border-width: 0 1px 1px 0;
        rotate: 45deg;
    }

    .pick select {
        appearance: none;
        flex: 1;
        min-width: 0;
        height: 17px;
        margin-right: 16px;
        outline: 0;
    }

    .style {
        width: 88px;
    }

    .style select {
        margin-right: 18px;
        padding-left: 13px;
    }

    .style.tight select {
        padding-left: 3px;
    }

    .workspace {
        width: 126px;
    }

    .workspace select {
        padding-left: 8px;
        font-size: 11px;
    }

    .layer {
        width: 215px;
        padding-left: 2px;
    }

    .mono select {
        font-family: "Liberation Mono", monospace;
        font-size: 11px;
    }

    .color {
        width: 106px;
    }

    .ltype {
        width: 119px;
    }

    .weight {
        width: 91px;
    }

    .plotstyle {
        width: 90px;
    }

    .plotstyle select {
        padding-left: 6px;
    }

    .rule {
        width: 43px;
        height: 1px;
        margin: 0 3px 0 4px;
        background: #444;
    }

    .weight .rule {
        width: 24px;
    }

    .weight select {
        margin-right: 8px;
    }

    /* workspace */
    main {
        display: flex;
        flex: 1;
        min-height: 0;
        background: #656565;
    }

    .side {
        width: 77px;
        flex: none;
        background: #f1f1f0;
        font-size: 11px;
        color: #111;
        overflow: hidden;
    }

    h2 {
        margin: 0;
        padding-left: 8px;
        font-size: 12px;
        font-weight: 400;
        line-height: 19px;
        background: #9e9e9e;
    }

    ul {
        margin: 0;
        padding: 0;
        list-style: none;
    }

    .ruled {
        border-top: 1px solid #999;
        padding-top: 3px;
    }

    li button {
        height: 13px;
        line-height: 13px;
    }

    .glyph {
        display: flex;
        justify-content: center;
        width: 14px;
        margin-right: 2px;
    }

    .label {
        display: flex;
        justify-content: space-between;
        width: 44px;
    }

    .label.wide {
        width: 48px;
    }

    .rail {
        display: flex;
        flex-direction: column;
        gap: 1px;
        flex: none;
    }

    .left {
        width: 25px;
        align-items: center;
    }

    .right {
        width: 17px;
        padding-left: 5px;
    }

    .column {
        display: flex;
        flex-direction: column;
        align-items: center;
        width: 17px;
        background: #eeeeec;
    }

    .column .tool {
        height: 16px;
    }

    .column .sep {
        width: 14px;
        height: 1px;
        margin: 1px 0;
    }

    .grip {
        width: 100%;
        height: 5px;
        background: #4a4a4a;
    }

    .view {
        position: relative;
        display: grid;
        grid-template-columns: 1fr 16px;
        grid-template-rows: 1fr 15px;
        flex: 1;
        min-width: 0;
    }

    .canvas {
        position: relative;
        min-height: 0;
        background: #000;
        overflow: hidden;
    }

    .drawing {
        position: absolute;
        left: 0;
        top: 0;
        width: 100%;
    }

    .viewlabel {
        position: absolute;
        left: 3px;
        top: 5px;
        font-family: "Liberation Sans", "Noto Sans CJK SC", sans-serif;
        font-size: 10px;
        color: #ddd;
    }

    .compass {
        position: absolute;
        right: 12px;
        top: 10px;
    }

    .dirs {
        font-size: 13px;
        fill: #b5b5b5;
        text-anchor: middle;
    }

    .face {
        font-size: 20px;
        fill: #4a4f5a;
        text-anchor: middle;
    }

    .wcs {
        gap: 3px;
        width: 34px;
        height: 13px;
        margin: 10px 0 0 29px;
        border-radius: 3px;
        background: #918f9c;
        color: #d8d8e0;
        font-size: 9px;
    }

    .wcs .caret {
        border-top-color: #b4b4bc;
    }

    .vscroll {
        display: flex;
        flex-direction: column;
        align-items: center;
        background: #f0f0f0;
    }

    .vscroll button {
        width: 16px;
        height: 16px;
    }

    .thumb {
        width: 14px;
        height: 15px;
        background: #cdcdcd;
    }

    .end {
        margin-top: auto;
    }

    .layouts {
        grid-column: span 2;
        display: flex;
        background: #f0f0f0;
        font-size: 11px;
    }

    .step {
        width: 13px;
        border-right: 1px solid #ccc;
        box-sizing: border-box;
    }

    .layout {
        position: relative;
        width: 43px;
    }

    .layout::before {
        content: "";
        position: absolute;
        inset: 0;
        border-right: 1px solid #666;
        transform: skewX(-20deg);
    }

    .layout span {
        position: relative;
    }

    .layout.on::before {
        background: #000;
    }

    .layout.on {
        color: #fff;
    }

    .hscroll {
        display: flex;
        flex: 1;
    }

    .split {
        width: 4px;
        margin-left: 386px;
        background: #ccc;
    }

    .hscroll button {
        width: 16px;
    }

    .hscroll .end {
        margin: 0 15px 0 auto;
    }

    /* floating command line */
    .command {
        position: absolute;
        left: 261px;
        bottom: 12px;
        width: 353px;
        font-family: "DejaVu Sans Mono", "Noto Sans CJK SC", monospace;
        font-size: 14px;
    }

    .history {
        width: 288px;
        margin: 0 0 3px 54px;
        padding: 1px 0 1px 2px;
        border-radius: 2px;
        background: linear-gradient(#484848, #666);
        color: #bbb;
        line-height: 16px;
    }

    .history p {
        margin: 0;
        white-space: nowrap;
    }

    .entry {
        display: flex;
        align-items: center;
        height: 24px;
        border-radius: 2px;
        background: linear-gradient(90deg, #4d4d4d, #666 49px, #fff 49px);
    }

    .handle {
        width: 4px;
        height: 16px;
        margin-left: 3px;
        border: dotted #aaa;
        border-width: 0 1px;
        box-sizing: border-box;
    }

    .x {
        width: 22px;
    }

    .cfg {
        width: 20px;
    }

    .entry label {
        display: flex;
        align-items: center;
        margin-left: 3px;
    }

    .entry label .caret {
        border-top-color: #888;
    }

    .faded {
        opacity: 0.6;
    }

    .entry b {
        margin-left: 5px;
        font-size: 13px;
    }

    .entry input {
        flex: 1;
        min-width: 0;
        height: 20px;
        margin-left: 6px;
        outline: 0;
    }

    .recent {
        width: 16px;
    }

    .brand {
        position: absolute;
        right: 33px;
        bottom: 1px;
        display: flex;
        align-items: center;
        gap: 12px;
        width: 180px;
        height: 85px;
        padding-left: 14px;
        box-sizing: border-box;
        background: #222f57;
        color: #cdd1dd;
        font-family: "DejaVu Sans", "Noto Sans CJK SC", sans-serif;
    }

    .brand strong, .brand span {
        display: block;
        white-space: nowrap;
    }

    .brand strong {
        font-size: 26px;
        line-height: 28px;
    }

    .brand span {
        font-size: 12px;
        line-height: 12px;
    }

    /* status bar, runs off the lower edge of the window */
    footer {
        display: flex;
        align-items: flex-start;
        height: 15px;
        flex: none;
        border-top: 1px solid #444;
        box-sizing: border-box;
        background: linear-gradient(#a8a8a8, #8a8a8a);
        overflow: hidden;
    }

    .ratio {
        gap: 4px;
        width: 74px;
        height: 20px;
        font-size: 12px;
    }

    .coords {
        width: 109px;
        padding-left: 6px;
        box-sizing: border-box;
        background: #888;
        color: #999;
        font-size: 11px;
        line-height: 20px;
    }

    .toggle {
        width: 16px;
        height: 16px;
        border-right: 1px solid #888;
        box-sizing: border-box;
        background: #b4b4b4;
    }

    .toggle.on, .mode.on {
        background: #a9dbe9;
    }

    .fill {
        flex: 1;
    }

    .mode {
        height: 20px;
        padding: 0 1px 0 2px;
        border-right: 1px solid #777;
        background: #b4b4b4;
        font-size: 11px;
    }

    .gap {
        width: 15px;
    }

    .gap.small {
        width: 4px;
    }

    .scale {
        gap: 3px;
        padding: 0 2px;
    }

    .lamp {
        width: 24px;
    }

    .menu {
        width: 12px;
    }

    .rest {
        width: 13px;
    }
</style>
